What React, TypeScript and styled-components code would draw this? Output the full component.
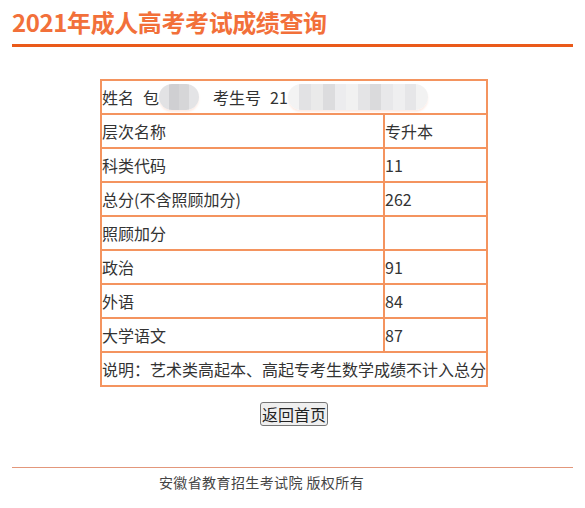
import React from "react";
import styled, { createGlobalStyle } from "styled-components";

const GlobalStyle = createGlobalStyle`
  html, body { margin: 0; padding: 0; background: #fff; }
  body {
    font-family: "Noto Sans CJK SC", "Noto Sans", "Liberation Sans", sans-serif;
    color: #333;
  }
`;

const Page = styled.div`
  padding: 0 12px;
`;

const Title = styled.h1`
  margin: 0;
  padding: 3px 0 4px;
  line-height: 37px;
  font-size: 24px;
  font-weight: bold;
  letter-spacing: -0.4px;
  color: #f2703a;
  border-bottom: 3px solid #ea5a1a;
`;

const Content = styled.div`
  width: 388px;
  margin: 32px 0 0 88px;
  text-align: center;
`;

const ScoreTable = styled.table`
  width: 388px;
  border-collapse: collapse;
  border: 2px solid #f4945f;
  font-size: 16px;
  color: #333;
  text-align: left;
`;

const Cell = styled.td<{ $w?: number }>`
  border: 2px solid #f4945f;
  padding: 0;
  height: 32px;
  line-height: 32px;
  white-space: nowrap;
  ${(p) => (p.$w ? `width: ${p.$w}px;` : "")}
`;

const InfoLine = styled.div`
  display: flex;
  align-items: center;
  height: 32px;
`;

const Part = styled.span<{ $gap?: number }>`
  margin-left: ${(p) => p.$gap ?? 0}px;
`;

const Mosaic = styled.span<{ $w: number }>`
  display: inline-flex;
  width: ${(p) => p.$w}px;
  height: 26px;
  border-radius: 13px;
  overflow: hidden;
  filter: blur(0.6px);
  box-shadow: 0 2px 2px rgba(250, 200, 180, 0.35);
`;

const Tile = styled.span<{ $c: string }>`
  flex: 1;
  background: ${(p) => p.$c};
`;

const BackButton = styled.button`
  margin-top: 15px;
  font-family: "Noto Sans CJK SC", sans-serif;
  font-size: 16px;
  line-height: 22px;
  padding: 0 1px;
  color: #222;
  background: #efefef;
  border: 1px solid #767676;
  border-radius: 3px;
`;

const Footer = styled.footer`
  margin-top: 41px;
  border-top: 1px solid #e3977b;
  padding-top: 4px;
  padding-right: 62px;
  text-align: center;
  font-size: 14px;
  line-height: 20px;
  letter-spacing: 0.4px;
  color: #444;
`;

const nameTiles = ["#e2e2e4", "#cfcfd2", "#d6d6d8", "#e4e4e6"];
const idTiles = [
  "#f3f3f3",
  "#e2e2e4",
  "#eaeaea",
  "#dcdcde",
  "#ececee",
  "#f1f1f1",
  "#e4e4e6",
  "#dadadc",
  "#e8e8ea",
  "#efeff0",
  "#e6e6e8",
  "#f2f2f2",
];

const rows: [string, string][] = [
  ["层次名称", "专升本"],
  ["科类代码", "11"],
  ["总分(不含照顾加分)", "262"],
  ["照顾加分", ""],
  ["政治", "91"],
  ["外语", "84"],
  ["大学语文", "87"],
];

export default function App() {
  return (
    <Page>
      <GlobalStyle />
      <Title>2021年成人高考考试成绩查询</Title>
      <Content>
        <ScoreTable>
          <tbody>
            <tr>
              <Cell colSpan={2}>
                <InfoLine>
                  <Part>姓名</Part>
                  <Part $gap={9}>包</Part>
                  <Mosaic $w={40}>
                    {nameTiles.map((c, i) => (
                      <Tile key={i} $c={c} />
                    ))}
                  </Mosaic>
                  <Part $gap={14}>考生号</Part>
                  <Part $gap={9}>21</Part>
                  <Mosaic $w={140}>
                    {idTiles.map((c, i) => (
                      <Tile key={i} $c={c} />
                    ))}
                  </Mosaic>
                </InfoLine>
              </Cell>
            </tr>
            {rows.map(([k, v]) => (
              <tr key={k}>
                <Cell $w={281}>{k}</Cell>
                <Cell>{v}</Cell>
              </tr>
            ))}
            <tr>
              <Cell colSpan={2}>说明：艺术类高起本、高起专考生数学成绩不计入总分</Cell>
            </tr>
          </tbody>
        </ScoreTable>
        <BackButton type="button">返回首页</BackButton>
      </Content>
      <Footer>安徽省教育招生考试院 版权所有</Footer>
    </Page>
  );
}
